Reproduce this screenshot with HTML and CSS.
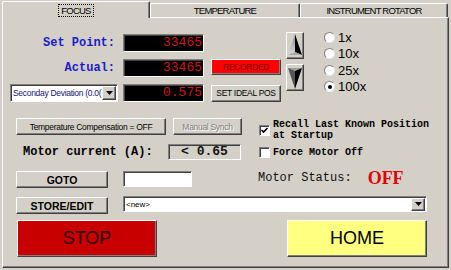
FILE: index.html
```html
<!DOCTYPE html>
<html lang="en">
<head>
  <meta charset="UTF-8" />
  <title>Focuser Control</title>
  <link rel="stylesheet" href="styles.css">
</head>
<body>

<div class="window">
  <div class="tabs">
    <div class="tab tab-active"><span class="focus-ring">FOCUS</span></div>
    <div class="tab">TEMPERATURE</div>
    <div class="tab">INSTRUMENT ROTATOR</div>
  </div>

  <div class="panel">
    <!-- position readouts + jog -->
    <div class="position">
      <div class="readouts">
        <div class="label-mono">Set Point:</div>
        <div class="lcd">33465</div>
        <div></div>

        <div class="label-mono">Actual:</div>
        <div class="lcd">33465</div>
        <button class="btn btn-recorded">RECORDED</button>

        <div class="combo combo-deviation">
          <span class="combo-text">Seconday Deviation (0.0(</span>
          <span class="combo-arrow"><svg width="7" height="4" viewBox="0 0 7 4"><path d="M0 0h7L3.5 4z" fill="#000"/></svg></span>
        </div>
        <div class="lcd">0.575</div>
        <button class="btn btn-ideal">SET IDEAL POS</button>
      </div>

      <div class="jog">
        <button class="btn btn-arrow">
          <svg width="16" height="25" viewBox="0 0 16 25">
            <defs>
              <linearGradient id="upface" x1="0" y1="0" x2="0" y2="1">
                <stop offset="0" stop-color="#8a8a8a"/>
                <stop offset="1" stop-color="#dcdcdc"/>
              </linearGradient>
            </defs>
            <polygon points="8,1 1,22 8,19" fill="url(#upface)"/>
            <polygon points="8,1 8,19 15,22" fill="#000"/>
            <polygon points="1,22 8,19 15,22" fill="#a8a8a8"/>
          </svg>
        </button>
        <button class="btn btn-arrow">
          <svg width="16" height="25" viewBox="0 0 16 25">
            <polygon points="1,3 8,6 15,3" fill="#a0a0a0"/>
            <polygon points="1,3 8,6 8,24" fill="#555"/>
            <polygon points="8,6 15,3 8,24" fill="#000"/>
          </svg>
        </button>
      </div>

      <div class="steps">
        <label class="radio"><span class="radio-dot"></span>1x</label>
        <label class="radio"><span class="radio-dot"></span>10x</label>
        <label class="radio"><span class="radio-dot"></span>25x</label>
        <label class="radio"><span class="radio-dot radio-on"></span>100x</label>
      </div>
    </div>

    <!-- compensation, current, goto, options -->
    <div class="controls">
      <div class="controls-left">
        <div class="row row-comp">
          <button class="btn btn-comp">Temperature Compensation = OFF</button>
          <button class="btn btn-synch" disabled>Manual Synch</button>
        </div>
        <div class="row row-current">
          <span class="label-current">Motor current (A):</span>
          <div class="readout-current">&lt; 0.65</div>
        </div>
        <div class="row row-goto">
          <button class="btn btn-bold">GOTO</button>
          <div class="field"></div>
        </div>
      </div>

      <div class="controls-right">
        <div class="check">
          <span class="check-box"><svg width="9" height="9" viewBox="0 0 9 9"><path d="M1.5 4l2 2 4-4" fill="none" stroke="#000" stroke-width="1.6"/></svg></span>
          <span>Recall Last Known Position<br>at Startup</span>
        </div>
        <div class="check check-force">
          <span class="check-box"></span>
          <span>Force Motor Off</span>
        </div>
        <div class="status">Motor Status: <span class="status-value">OFF</span></div>
      </div>
    </div>

    <div class="row row-store">
      <button class="btn btn-bold">STORE/EDIT</button>
      <div class="combo combo-preset">
        <span class="combo-text">&lt;new&gt;</span>
        <span class="combo-arrow"><svg width="7" height="4" viewBox="0 0 7 4"><path d="M0 0h7L3.5 4z" fill="#000"/></svg></span>
      </div>
    </div>

    <div class="row row-actions">
      <button class="btn btn-big btn-stop">STOP</button>
      <button class="btn btn-big btn-home">HOME</button>
    </div>
  </div>
</div>

</body>
</html>
```

FILE: styles.css
```css
* {
  margin: 0;
  padding: 0;
  box-sizing: border-box;
}

body {
  background: #d4d0c8;
  font-family: "Liberation Sans", Arial, sans-serif;
  color: #000;
}

.window {
  padding: 0 2px;
  width: 451px;
}

/* tabs */
.tabs {
  display: flex;
  align-items: flex-end;
  height: 17px;
}

.tab {
  width: 150px;
  height: 14px;
  display: flex;
  align-items: center;
  justify-content: center;
  font-size: 9.5px;
  letter-spacing: -0.8px;
  border: 1px solid;
  border-bottom: none;
  border-color: #fff #404040 #404040 #fff;
  border-radius: 2px 2px 0 0;
  box-shadow: inset -1px 0 #808080;
  background: #d4d0c8;
}

.tab:last-child {
  width: 148px;
}

.tab-active {
  width: 148px;
  height: 17px;
  margin-bottom: -1px;
  z-index: 1;
}

.focus-ring {
  outline: 1px dotted #000;
  outline-offset: 0;
  padding: 0 2px;
  line-height: 11px;
}

.panel {
  height: 251px;
  border: 1px solid;
  border-color: #fff #404040 #404040 #fff;
  box-shadow: inset -1px -1px #808080;
  padding: 11px 0 0 7px;
}

/* shared widgets */
.btn {
  display: flex;
  align-items: center;
  justify-content: center;
  background: #d4d0c8;
  border: 1px solid;
  border-color: #fff #404040 #404040 #fff;
  box-shadow: inset -1px -1px #808080;
  font-family: "Liberation Sans", Arial, sans-serif;
  font-size: 8.5px;
  letter-spacing: -0.3px;
  color: #000;
  white-space: nowrap;
}

.lcd,
.readout-current,
.field,
.combo {
  border: 1px solid;
  border-color: #808080 #fff #fff #808080;
  box-shadow: inset 1px 1px #404040;
}

.label-mono {
  font-family: "Liberation Mono", "Courier New", monospace;
  font-weight: 700;
  font-size: 12px;
  color: #1c1cc8;
  text-align: right;
  padding-right: 8px;
  align-self: center;
}

.lcd {
  width: 81px;
  height: 18px;
  background: #000;
  color: #cc1a1a;
  font-family: "Liberation Mono", "Courier New", monospace;
  font-size: 13px;
  line-height: 16px;
  text-align: right;
  padding-right: 1px;
}

.combo {
  display: flex;
  align-items: center;
  background: #fff;
  overflow: hidden;
  padding: 0 1px 0 2px;
}

.combo-text {
  flex: 1;
  font-size: 8.5px;
  letter-spacing: -0.3px;
  white-space: nowrap;
  overflow: hidden;
}

.combo-arrow {
  width: 14px;
  height: 14px;
  flex-shrink: 0;
  display: flex;
  align-items: center;
  justify-content: center;
  background: #d4d0c8;
  border: 1px solid;
  border-color: #fff #404040 #404040 #fff;
  box-shadow: inset -1px -1px #808080;
}

/* position block */
.position {
  display: flex;
  align-items: flex-start;
}

.readouts {
  margin-top: 5px;
  display: grid;
  grid-template-columns: 113px 88px 70px;
  grid-template-rows: 18px 18px 18px;
  row-gap: 7px;
}

.combo-deviation {
  width: 108px;
  height: 18px;
  color: #14147a;
}

.btn-recorded {
  height: 16px;
  background: #ff0000;
  color: #7a0000;
  align-self: start;
}

.btn-ideal {
  height: 17px;
  align-self: center;
}

.jog {
  margin: 3px 0 0 5px;
  display: flex;
  flex-direction: column;
  gap: 5px;
}

.btn-arrow {
  width: 18px;
  height: 27px;
}

.steps {
  margin-left: 18px;
  display: flex;
  flex-direction: column;
}

.radio {
  height: 16.5px;
  display: flex;
  align-items: center;
  gap: 3px;
  font-size: 13px;
}

.radio-dot {
  width: 11px;
  height: 11px;
  margin-left: 2px;
  border-radius: 50%;
  background: #fff;
  border: 1px solid;
  border-color: #808080 #e8e8e8 #e8e8e8 #808080;
  display: flex;
  align-items: center;
  justify-content: center;
}

.radio-on::after {
  content: '';
  width: 4px;
  height: 4px;
  border-radius: 50%;
  background: #000;
}

/* middle controls */
.controls {
  margin: 16px 0 0 6px;
  display: flex;
  gap: 16px;
}

.controls-left {
  width: 226px;
}

.row {
  display: flex;
}

.row-comp {
  height: 17px;
  gap: 7px;
}

.btn-comp {
  width: 150px;
}

.btn-synch {
  width: 69px;
  color: #808080;
  text-shadow: 1px 1px #fff;
}

.row-current {
  margin-top: 9px;
  height: 16px;
  align-items: center;
}

.label-current {
  width: 152px;
  padding-left: 7px;
  font-family: "Liberation Mono", "Courier New", monospace;
  font-weight: 700;
  font-size: 12px;
}

.readout-current {
  width: 73px;
  height: 16px;
  font-family: "Liberation Mono", "Courier New", monospace;
  font-weight: 700;
  font-size: 13px;
  line-height: 14px;
  text-align: center;
  color: #111;
}

.row-goto {
  margin-top: 11px;
  height: 17px;
  gap: 15px;
}

.btn-bold {
  width: 92px;
  height: 17px;
  font-size: 10.5px;
  font-weight: 700;
  letter-spacing: 0;
}

.field {
  width: 69px;
  height: 16px;
  background: #fff;
}

.controls-right {
  padding-top: 1px;
  font-family: "Liberation Mono", "Courier New", monospace;
  font-weight: 700;
  font-size: 10px;
  line-height: 11px;
}

.check {
  display: flex;
  align-items: center;
  gap: 3px;
  padding-left: 1px;
}

.check-force {
  margin-top: 6px;
}

.check-box {
  width: 11px;
  height: 11px;
  background: #fff;
  border: 1px solid;
  border-color: #808080 #fff #fff #808080;
  box-shadow: inset 1px 1px #404040;
  display: flex;
  align-items: center;
  justify-content: center;
}

.status {
  margin-top: 10px;
  line-height: 20px;
  font-weight: 400;
  font-size: 12px;
  color: #111;
  display: flex;
  align-items: center;
}

.status-value {
  margin-left: 16px;
  font-family: "Liberation Serif", "Times New Roman", serif;
  font-weight: 700;
  font-size: 18px;
  color: #e00000;
}

/* lower rows */
.row-store {
  margin: 8px 0 0 6px;
  align-items: flex-start;
  gap: 15px;
}

.row-store .btn-bold {
  margin-top: 1px;
}

.combo-preset {
  width: 304px;
  height: 16px;
}

.combo-preset .combo-text {
  font-size: 8px;
  letter-spacing: 0;
}

.combo-preset .combo-arrow {
  height: 13px;
}

.row-actions {
  margin-top: 6px;
  padding: 0 21px 0 7px;
  justify-content: space-between;
}

.btn-big {
  width: 140px;
  height: 37px;
  font-size: 18px;
  letter-spacing: 0;
}

.btn-stop {
  background: #c80000;
  color: #2a0000;
}

.btn-home {
  background: #ffff80;
  color: #000;
}
```
